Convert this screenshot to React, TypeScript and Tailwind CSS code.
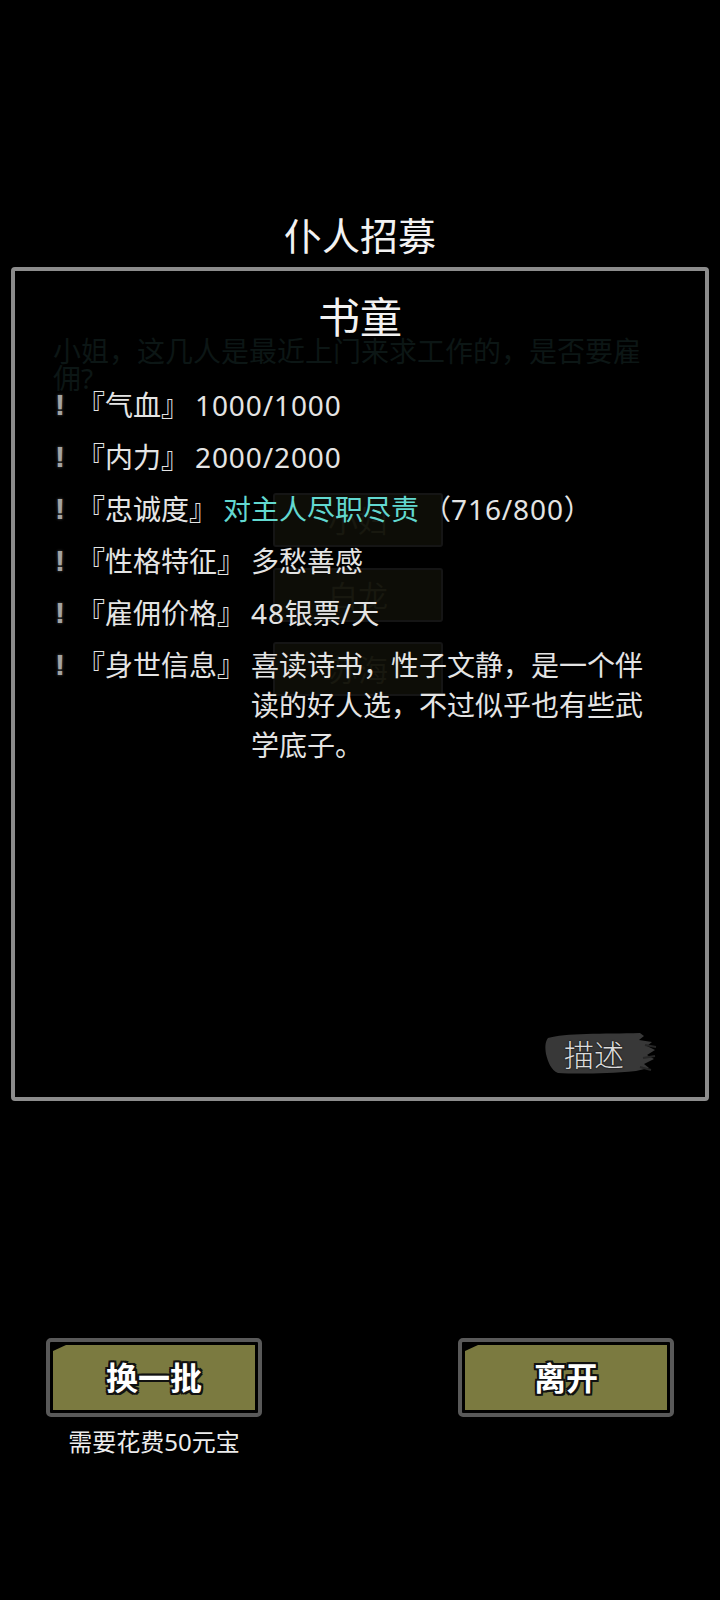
import React from 'react';

const CJK = "font-['Noto_Sans','Noto_Sans_CJK_SC',sans-serif]";

type Row = { label: string; value: React.ReactNode };

const Num = ({ children }: { children: React.ReactNode }) => (
  <span className="tracking-[0.9px]">{children}</span>
);

const rows: Row[] = [
  { label: '『气血』', value: <Num>1000/1000</Num> },
  { label: '『内力』', value: <Num>2000/2000</Num> },
  {
    label: '『忠诚度』',
    value: (
      <>
        <span className="text-[#62d8d0]">对主人尽职尽责</span>
        <span className="ml-[4px]">（<Num>716/800</Num>）</span>
      </>
    ),
  },
  { label: '『性格特征』', value: '多愁善感' },
  { label: '『雇佣价格』', value: <><Num>48</Num>银票/天</> },
  { label: '『身世信息』', value: '喜读诗书，性子文静，是一个伴读的好人选，不过似乎也有些武学底子。' },
];

// faint dialog that sits behind the popup
const ghostButtons = [
  { top: 'top-[222px]', text: '小妇' },
  { top: 'top-[297px]', text: '白龙' },
  { top: 'top-[371px]', text: '苏海' },
];

function OliveButton({ label }: { label: string }) {
  return (
    <div className="w-[216px] h-[79px] rounded-[5px] border-4 border-[#595959] bg-black p-[3px]">
      <div className="h-full w-full bg-[#7b7a40] flex items-center justify-center [clip-path:polygon(13px_0,100%_0,100%_100%,0_100%,0_6px)]">
        <span className="text-[32px] font-bold leading-none text-white [text-shadow:2px_2px_0_#111,-2px_-2px_0_#111,2px_-2px_0_#111,-2px_2px_0_#111,0_2px_0_#111,2px_0_0_#111,-2px_0_0_#111,0_-2px_0_#111]">
          {label}
        </span>
      </div>
    </div>
  );
}

export default function App() {
  return (
    <div className={`w-[720px] h-[1600px] bg-black flex flex-col ${CJK}`}>
      <div className="pt-[211px] h-[259px] text-center text-[38px] leading-[48px] text-[#f2f2f2]">仆人招募</div>

      <div className="relative mt-[8px] mx-[11px] h-[834px] rounded-[4px] border-4 border-[#8c8c8c] flex flex-col">
        {/* background dialog, dimmed */}
        <div className="absolute left-[38px] top-[67px] w-[600px] text-[28px] leading-[27px] text-[#0c1615]">
          小姐，这几人是最近上门来求工作的，是否要雇佣?
        </div>
        {ghostButtons.map(b => (
          <div
            key={b.text}
            className={`absolute left-[258px] ${b.top} w-[170px] h-[54px] border-2 border-[#151515] rounded-[3px] bg-[#0d0d07] flex items-center justify-center text-[30px] text-[#18180f]`}
          >
            {b.text}
          </div>
        ))}

        <div className="relative pt-[22px] text-center text-[42px] leading-[48px] text-[#f2f2f2]">书童</div>

        <div className="relative mt-[44px] flex flex-col gap-[12px] pl-[38px] text-[28px] leading-[40px] text-[#e4e4e4]">
          {rows.map(r => (
            <div key={r.label} className="flex items-start">
              <span className="w-[14px] text-center font-['Liberation_Sans',sans-serif] font-bold text-[30px] text-[#a4a4a4] [text-shadow:0_0_3px_#555]">
                !
              </span>
              <span className="ml-[10px] whitespace-nowrap">{r.label}</span>
              <span className="ml-[6px] max-w-[400px]">{r.value}</span>
            </div>
          ))}
        </div>

        <div className="relative mt-auto mb-[21px] mr-[47px] self-end w-[116px] h-[46px] flex items-center justify-center">
          <svg className="absolute inset-0 blur-[0.6px]" width="116" height="46" viewBox="0 0 116 46">
            <path
              d="M6 8 C22 3 62 4 98 3 L102 6 L97 10 L110 12 L105 16 L113 20 L105 25 L112 29 L102 34 L107 38 L94 41 C62 44 32 44 16 43 C9 40 6 32 4 24 C3 17 3 12 6 8 Z"
              fill="#383838"
            />
            <path d="M103 15 L114 17 M101 28 L113 26 M98 37 L109 40" stroke="#262626" strokeWidth="2" />
          </svg>
          <span className="relative -ml-[12px] text-[30px] leading-none text-[#dcdcdc] font-['Noto_Sans_CJK_SC',serif] font-light [text-shadow:0_0_2px_#000]">
            描述
          </span>
        </div>
      </div>

      <div className="mt-[237px] px-[46px] flex justify-between items-start">
        <div className="flex flex-col items-center">
          <OliveButton label="换一批" />
          <div className="mt-[10px] text-[24px] leading-[30px] text-[#ececec]">需要花费50元宝</div>
        </div>
        <OliveButton label="离开" />
      </div>
    </div>
  );
}
